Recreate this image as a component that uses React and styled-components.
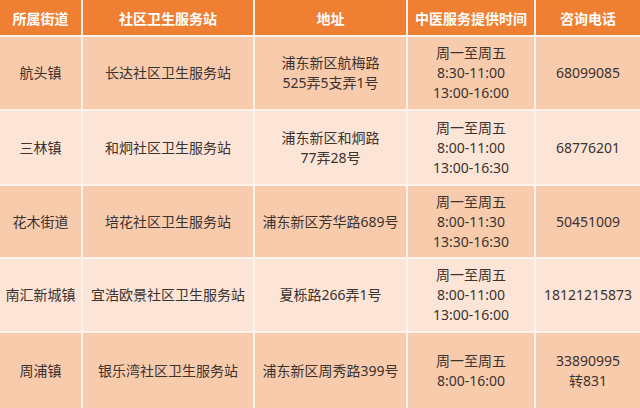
import React from 'react';
import styled, { createGlobalStyle } from 'styled-components';

const GlobalStyle = createGlobalStyle`
  html, body {
    margin: 0;
    padding: 0;
    background: #fff;
  }
  body {
    font-family: "Noto Sans", "Noto Sans CJK SC", sans-serif;
  }
`;

const columns = ['所属街道', '社区卫生服务站', '地址', '中医服务提供时间', '咨询电话'];

const rows = [
  ['航头镇', '长达社区卫生服务站', ['浦东新区航梅路', '525弄5支弄1号'], ['周一至周五', '8:30-11:00', '13:00-16:00'], ['68099085']],
  ['三林镇', '和炯社区卫生服务站', ['浦东新区和炯路', '77弄28号'], ['周一至周五', '8:00-11:00', '13:00-16:30'], ['68776201']],
  ['花木街道', '培花社区卫生服务站', ['浦东新区芳华路689号'], ['周一至周五', '8:00-11:30', '13:30-16:30'], ['50451009']],
  ['南汇新城镇', '宜浩欧景社区卫生服务站', ['夏栎路266弄1号'], ['周一至周五', '8:00-11:00', '13:00-16:00'], ['18121215873']],
  ['周浦镇', '银乐湾社区卫生服务站', ['浦东新区周秀路399号'], ['周一至周五', '8:00-16:00'], ['33890995', '转831']],
];

const Table = styled.div`
  display: grid;
  grid-template-columns: 81px 170px 151px 126px 104px;
  grid-template-rows: 35px 72px 73px 71px 72px 75px;
  gap: 2px;
  width: 640px;
  height: 408px;
  background: #fdf3ec;
`;

const HeadCell = styled.div`
  display: flex;
  align-items: center;
  justify-content: center;
  background: #ee7f33;
  color: #fff;
  font-size: 14px;
  font-weight: 700;
  white-space: nowrap;
`;

const Cell = styled.div`
  display: flex;
  flex-direction: column;
  align-items: center;
  justify-content: center;
  background: ${(p) => (p.$odd ? '#f8cbad' : '#fce4d6')};
  color: #3b3330;
  font-size: 14px;
  line-height: 20px;
  white-space: nowrap;
  text-align: center;
`;

const Line = styled.span`
  display: block;
`;

const App = () => (
  <>
    <GlobalStyle />
    <Table>
      {columns.map((c) => (
        <HeadCell key={c}>{c}</HeadCell>
      ))}
      {rows.map((r, i) =>
        r.map((v, j) => (
          <Cell key={`${i}-${j}`} $odd={i % 2 === 0}>
            {Array.isArray(v) ? v.map((l) => <Line key={l}>{l}</Line>) : v}
          </Cell>
        ))
      )}
    </Table>
  </>
);

export default App;
